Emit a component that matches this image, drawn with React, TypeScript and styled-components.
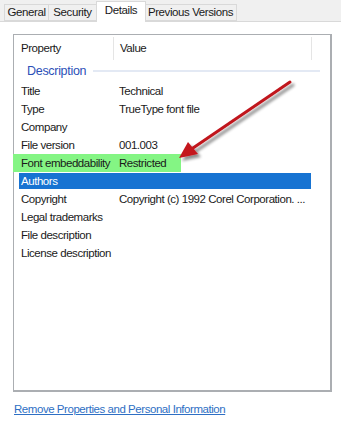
import React from "react";
import styled, { createGlobalStyle } from "styled-components";

const Global = createGlobalStyle`
  html, body { margin: 0; padding: 0; background: #ffffff; }
  body { font-family: "Liberation Sans", Arial, sans-serif; font-size: 11.5px; color: #1a1a1a; }
`;

const Page = styled.div`
  position: relative;
  width: 341px;
  height: 424px;
  overflow: hidden;
  background: #fff;
`;

const TabStrip = styled.div`
  height: 22px;
  box-sizing: border-box;
  display: flex;
  align-items: flex-end;
  padding-left: 4px;
  background: #f0f0f0;
  border-bottom: 1px solid #d9d9d9;
`;

const Tab = styled.div<{ $active?: boolean; $w: number }>`
  box-sizing: border-box;
  width: ${(p) => p.$w}px;
  height: ${(p) => (p.$active ? 21 : 17)}px;
  margin-bottom: ${(p) => (p.$active ? -1 : 0)}px;
  margin-left: ${(p) => (p.$active ? -1 : 0)}px;
  margin-right: ${(p) => (p.$active ? -1 : 0)}px;
  display: flex;
  align-items: center;
  justify-content: center;
  padding-bottom: ${(p) => (p.$active ? 4 : 1)}px;
  background: ${(p) => (p.$active ? "#ffffff" : "#f0f0f0")};
  border: 1px solid #d9d9d9;
  border-bottom: ${(p) => (p.$active ? "none" : "1px solid #d9d9d9")};
  border-left: ${(p) => (p.$active ? "1px solid #d9d9d9" : "none")};
  &:first-child { border-left: 1px solid #d9d9d9; }
  font-size: 11.5px;
  letter-spacing: -0.4px;
  color: #1a1a1a;
  white-space: nowrap;
  position: relative;
  z-index: ${(p) => (p.$active ? 1 : 0)};
`;

const Body = styled.div`
  padding: 12px 0 0 13px;
`;

const ListBox = styled.div`
  box-sizing: border-box;
  width: 319px;
  height: 358px;
  border: 2px solid #abaeb2;
  border-top-width: 1px;
  border-left-width: 1px;
  background: #fff;
  display: flex;
  flex-direction: column;
`;

const HeaderRow = styled.div`
  height: 25px;
  display: grid;
  grid-template-columns: 99px 198px 1fr;
  align-items: stretch;
`;

const HeaderCell = styled.div<{ $divider?: boolean }>`
  display: flex;
  align-items: center;
  padding-left: ${(p) => (p.$divider ? 6 : 7)}px;
  padding-bottom: 1px;
  border-left: ${(p) => (p.$divider ? "1px solid #e5e5e5" : "none")};
  margin: 2px 0 0;
  letter-spacing: -0.45px;
  color: #1a1a1a;
`;

const GroupHeader = styled.div`
  height: 21px;
  display: flex;
  align-items: center;
  padding: 0 10px 1px 13px;
  gap: 7px;
`;

const GroupTitle = styled.span`
  color: #2c50b8;
  font-size: 12.5px;
  letter-spacing: -0.3px;
`;

const GroupLine = styled.div`
  flex: 1;
  height: 2px;
  background: #e3e9f4;
  margin-top: 1px;
`;

const Rows = styled.div`
  display: flex;
  flex-direction: column;
`;

const Row = styled.div<{ $selected?: boolean; $marked?: boolean }>`
  box-sizing: border-box;
  height: 18px;
  width: 292px;
  margin-left: 5px;
  padding-left: 2px;
  display: grid;
  grid-template-columns: 98px 1fr;
  align-items: center;
  white-space: nowrap;
  letter-spacing: -0.45px;
  color: ${(p) => (p.$selected ? "#ffffff" : "#1a1a1a")};
  background: ${(p) =>
    p.$selected
      ? "linear-gradient(#1773d2, #1773d2) 0 1px / 100% 16px no-repeat"
      : p.$marked
      ? "linear-gradient(#84f584, #84f584) 0 0 / 162px 100% no-repeat"
      : "transparent"};
  box-shadow: ${(p) => (p.$marked ? "-6px 0 0 0 #84f584" : "none")};
`;

const Cell = styled.span`
  overflow: visible;
`;

const Link = styled.a`
  display: block;
  margin: 11px 0 0 14px;
  color: #2e6fc4;
  text-decoration: underline;
  font-size: 11.5px;
  letter-spacing: -0.45px;
  cursor: pointer;
`;

const ArrowLayer = styled.svg`
  position: absolute;
  left: 0;
  top: 0;
  pointer-events: none;
`;

const rows: { name: string; value: string; selected?: boolean; marked?: boolean }[] = [
  { name: "Title", value: "Technical" },
  { name: "Type", value: "TrueType font file" },
  { name: "Company", value: "" },
  { name: "File version", value: "001.003" },
  { name: "Font embeddability", value: "Restricted", marked: true },
  { name: "Authors", value: "", selected: true },
  { name: "Copyright", value: "Copyright (c) 1992 Corel Corporation. ..." },
  { name: "Legal trademarks", value: "" },
  { name: "File description", value: "" },
  { name: "License description", value: "" },
];

export default function App() {
  return (
    <>
      <Global />
      <Page>
        <TabStrip>
          <Tab $w={45}>General</Tab>
          <Tab $w={48}>Security</Tab>
          <Tab $w={50} $active>Details</Tab>
          <Tab $w={92}>Previous Versions</Tab>
        </TabStrip>
        <Body>
          <ListBox>
            <HeaderRow>
              <HeaderCell>Property</HeaderCell>
              <HeaderCell $divider>Value</HeaderCell>
              <HeaderCell $divider />
            </HeaderRow>
            <GroupHeader>
              <GroupTitle>Description</GroupTitle>
              <GroupLine />
            </GroupHeader>
            <Rows>
              {rows.map((r) => (
                <Row key={r.name} $selected={r.selected} $marked={r.marked}>
                  <Cell>{r.name}</Cell>
                  <Cell>{r.value}</Cell>
                </Row>
              ))}
            </Rows>
          </ListBox>
        </Body>
        <Link>Remove Properties and Personal Information</Link>
        <ArrowLayer width="341" height="424" viewBox="0 0 341 424">
          <defs>
            <filter id="sh" x="-20%" y="-20%" width="140%" height="140%">
              <feGaussianBlur in="SourceAlpha" stdDeviation="1.6" />
              <feOffset dx="3" dy="3" result="b" />
              <feComponentTransfer>
                <feFuncA type="linear" slope="0.45" />
              </feComponentTransfer>
              <feMerge>
                <feMergeNode />
                <feMergeNode in="SourceGraphic" />
              </feMerge>
            </filter>
            <linearGradient id="rg" x1="0" y1="0" x2="1" y2="1">
              <stop offset="0" stopColor="#d01a22" />
              <stop offset="1" stopColor="#b0101a" />
            </linearGradient>
          </defs>
          <g filter="url(#sh)">
            <line x1="290" y1="82" x2="193" y2="148" stroke="url(#rg)" strokeWidth="3" strokeLinecap="round" />
            <path d="M179 158 L188 142 L198 154 Z" fill="#c4141d" />
          </g>
        </ArrowLayer>
      </Page>
    </>
  );
}
